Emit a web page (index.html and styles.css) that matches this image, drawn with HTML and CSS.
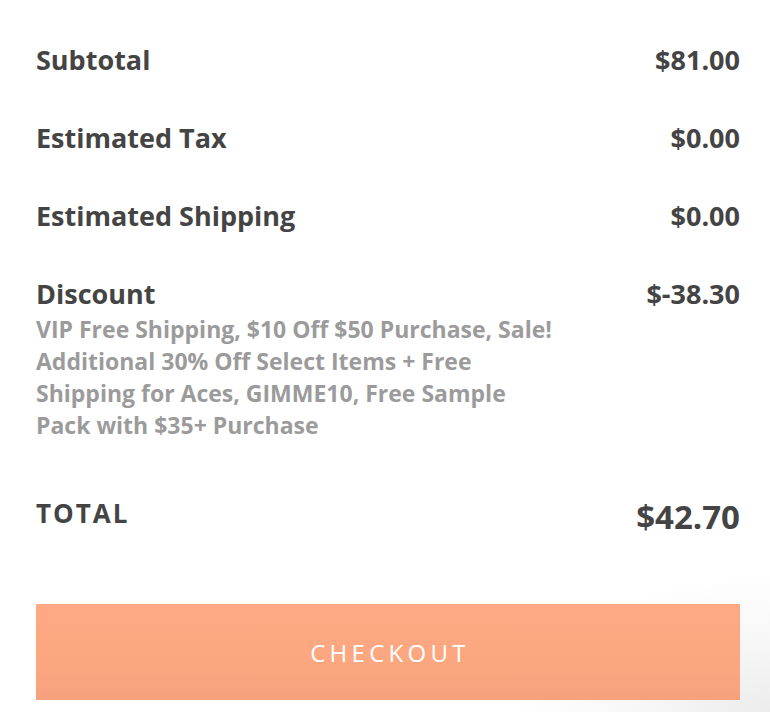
FILE: index.html
```html
<!DOCTYPE html>
<html>
<head>
<meta charset="utf-8">
<link rel="stylesheet" href="styles.css">
</head>
<body>
<div class="summary">
  <div class="row">
    <div class="label">Subtotal</div>
    <div class="value">$81.00</div>
  </div>
  <div class="row">
    <div class="label">Estimated Tax</div>
    <div class="value">$0.00</div>
  </div>
  <div class="row">
    <div class="label">Estimated Shipping</div>
    <div class="value">$0.00</div>
  </div>
  <div class="row discount">
    <div class="label">Discount
      <div class="desc">VIP Free Shipping, $10 Off $50 Purchase, Sale!<br>Additional 30% Off Select Items + Free<br>Shipping for Aces, GIMME10, Free Sample<br>Pack with $35+ Purchase</div>
    </div>
    <div class="value">$-38.30</div>
  </div>
  <div class="row total">
    <div class="label">TOTAL</div>
    <div class="value">$42.70</div>
  </div>
  <button class="checkout">CHECKOUT</button>
</div>
</body>
</html>
```
FILE: styles.css
```css
html, body {
  margin: 0;
  padding: 0;
  height: 100%;
}
body {
  background: radial-gradient(ellipse 260px 140px at 100% 100%, #ececec 0%, #f6f6f6 45%, #ffffff 100%);
  font-family: "Open Sans", Lato, sans-serif;
  color: #444444;
}
.summary {
  padding: 42px 30px 0 36px;
}
.row {
  display: flex;
  justify-content: space-between;
  align-items: flex-start;
  font-weight: 700;
  font-size: 27px;
  line-height: 36px;
  margin-bottom: 42px;
}
.desc {
  white-space: nowrap;
  color: #9b9b9b;
  font-size: 23px;
  font-weight: 700;
  line-height: 32px;
  margin-top: 1px;
}
.discount {
  margin-bottom: 54px;
}
.total .label {
  letter-spacing: 2px;
  font-size: 26px;
}
.total .value {
  font-size: 33px;
  margin-top: 4px;
}
.total {
  margin-bottom: 69px;
}
.checkout {
  display: block;
  width: 704px;
  height: 96px;
  border: none;
  margin: 0;
  background: linear-gradient(180deg, #fea983 0%, #fca680 70%, #f6a07e 100%);
  color: #ffffff;
  font-family: "Open Sans", sans-serif;
  font-size: 24px;
  letter-spacing: 4.3px;
  font-weight: 500;
  padding: 0 0 0 4px;
}
```
